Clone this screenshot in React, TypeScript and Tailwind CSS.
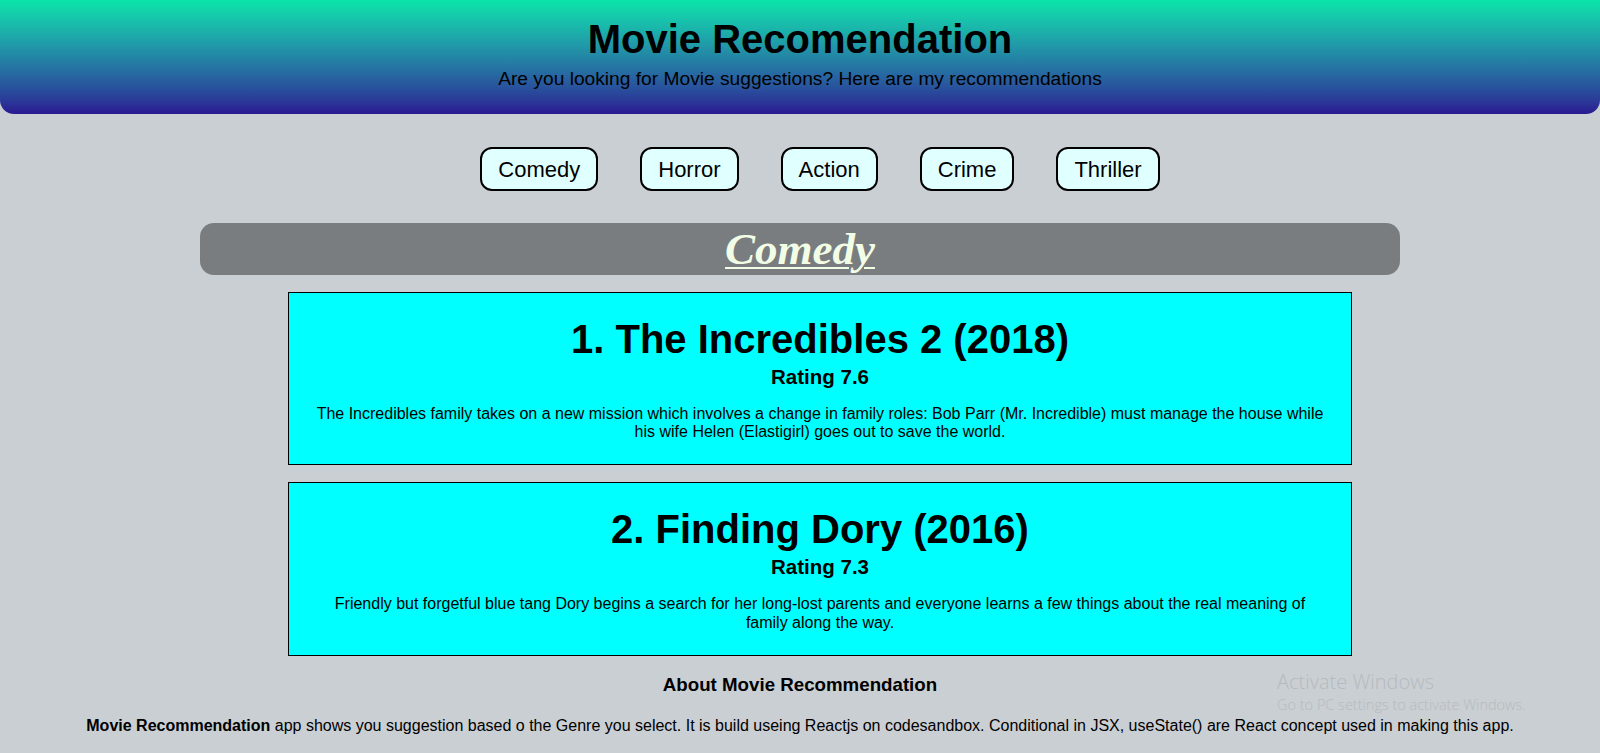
import { useState } from 'react'

type Movie = { name: string; rating: string; desc: string }

const genres: Record<string, Movie[]> = {
  Comedy: [
    {
      name: '1. The Incredibles 2 (2018)',
      rating: '7.6',
      desc: 'The Incredibles family takes on a new mission which involves a change in family roles: Bob Parr (Mr. Incredible) must manage the house while his wife Helen (Elastigirl) goes out to save the world.',
    },
    {
      name: '2. Finding Dory (2016)',
      rating: '7.3',
      desc: 'Friendly but forgetful blue tang Dory begins a search for her long-lost parents and everyone learns a few things about the real meaning of family along the way.',
    },
  ],
  Horror: [
    { name: '1. The Conjuring (2013)', rating: '7.5', desc: 'Paranormal investigators work to help a family terrorized by a dark presence in their farmhouse.' },
  ],
  Action: [
    { name: '1. Mad Max: Fury Road (2015)', rating: '8.1', desc: 'In a post-apocalyptic wasteland, a woman rebels against a tyrannical ruler in search for her homeland.' },
  ],
  Crime: [
    { name: '1. The Departed (2006)', rating: '8.5', desc: 'An undercover cop and a mole in the police attempt to identify each other while infiltrating an Irish gang in Boston.' },
  ],
  Thriller: [
    { name: '1. Shutter Island (2010)', rating: '8.2', desc: 'In 1954, a U.S. Marshal investigates the disappearance of a murderer who escaped from a hospital for the criminally insane.' },
  ],
}

export default function App() {
  const [genre, setGenre] = useState('Comedy')

  return (
    <div className="relative min-h-screen bg-[#cacfd3] font-['Liberation_Sans',Arial,sans-serif] text-black">
      {/* Header */}
      <header className="h-[114px] rounded-b-[14px] bg-gradient-to-b from-[#0ae5aa] to-[#2b1892] text-center">
        <h1 className="pt-[16px] text-[40px] font-bold leading-[46px]">Movie Recomendation</h1>
        <p className="mt-[6px] text-[19.2px] leading-[22px]">
          Are you looking for Movie suggestions? Here are my recommendations
        </p>
      </header>

      {/* Genre buttons */}
      <div className="mt-[33px] flex justify-center gap-[42px] pl-[40px]">
        {Object.keys(genres).map(g => (
          <button
            key={g}
            onClick={() => setGenre(g)}
            className="h-[44px] cursor-pointer rounded-[12px] border-2 border-black bg-[#e0ffff] px-[16px] text-[22px] leading-[25px]"
          >
            {g}
          </button>
        ))}
      </div>

      <div className="mx-auto mt-[32px] w-3/4">
        <div className="h-[52px] rounded-[14px] bg-[#7a7d80] text-center">
          <h2 className="font-['Liberation_Serif','Times_New_Roman',serif] text-[45px] font-bold italic leading-[52px] text-[#f2fde6] underline decoration-[2px] underline-offset-[3px]">
            {genre}
          </h2>
        </div>

        <ul className="mt-[16.5px] flex flex-col gap-[17px] pl-[40px]">
          {genres[genre].map(m => (
            <li key={m.name} className="mx-[48px] border border-black bg-[#00ffff] px-6 pt-[23px] pb-[23px] text-center">
              <div className="text-[40px] font-bold leading-[46px]">{m.name}</div>
              <div className="mt-[3px] text-[20.5px] font-bold leading-[23.5px]">Rating {m.rating}</div>
              <p className="mt-[16.5px] text-[16px] leading-[18.4px]">{m.desc}</p>
            </li>
          ))}
        </ul>
      </div>

      {/* About */}
      <div className="mt-[18px] pb-[20px] text-center">
        <h3 className="text-[18.72px] font-bold leading-[21.5px]">About Movie Recommendation</h3>
        <p className="mt-[21.5px] text-[16px] leading-[18.4px]">
          <b>Movie Recommendation</b> app shows you suggestion based o the Genre you select. It is build useing Reactjs on
          codesandbox. Conditional in JSX, useState() are React concept used in making this app.
        </p>
      </div>

      {/* OS watermark */}
      <div className="pointer-events-none absolute left-[1277px] top-[669px] font-['Open_Sans',sans-serif] text-[#b6babe]">
        <div className="text-[20px] font-light leading-[25px]">Activate Windows</div>
        <div className="mt-[1px] text-[14.5px] font-light leading-[19px]">Go to PC settings to activate Windows.</div>
      </div>
    </div>
  )
}
